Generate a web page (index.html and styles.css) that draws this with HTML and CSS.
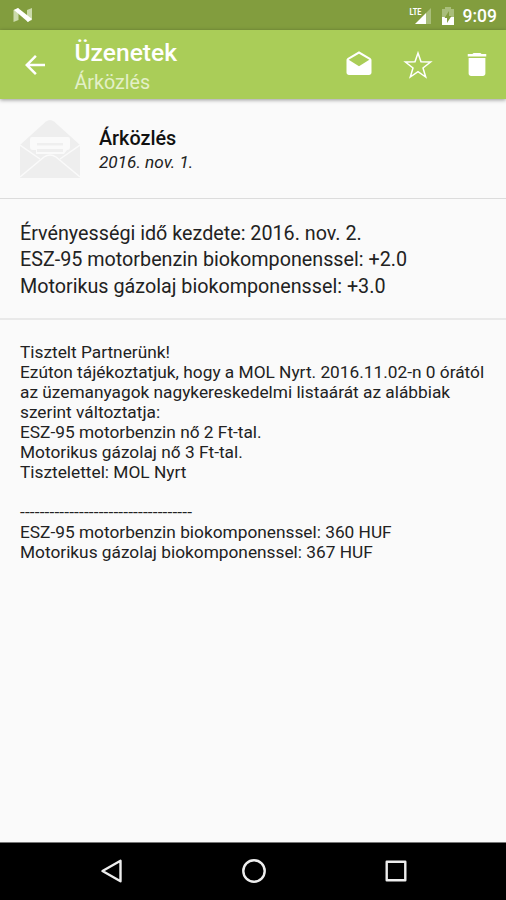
FILE: index.html
```
<!DOCTYPE html>
<html lang="hu">
<head>
    <meta charset="UTF-8">
    <meta name="viewport" content="width=device-width, initial-scale=1.0">
    <title>Üzenetek</title>
    <link rel="stylesheet" href="styles.css">
</head>
<body>
    <div class="status-bar">
        <svg class="logo" width="20" height="16" viewBox="0 0 20 16">
            <path d="M.5 3l5-2v12l-5 2zM14 3l5-2v12l-5 2z" fill="#cbdaab"/>
            <path d="M1 3l4-2 14 11-4 3z" fill="#fff"/>
        </svg>
        <svg class="signal" width="24" height="20" viewBox="0 0 24 20">
            <path d="M23 3v16h-5V8z" fill="#a9be7b"/>
            <path d="M18 8v11H7z" fill="#fff"/>
            <text class="lte" x="1.500" y="9.500" textLength="12" lengthAdjust="spacingAndGlyphs">LTE</text>
        </svg>
        <svg class="battery" width="12" height="20" viewBox="0 0 12 20">
            <path d="M0 3h3V1h6v2h3v8H0z" fill="#a9be7b"/>
            <path d="M0 11h12v8H0z" fill="#fff"/>
            <path d="M7 5v5h2.500l-4.500 7v-5H2.500z" fill="#829d3e"/>
        </svg>
        <span class="clock">9:09</span>
    </div>

    <div class="app-bar">
        <svg class="back" width="30" height="30" viewBox="0 0 24 24">
            <path d="M20 11H7.830l5.590-5.590L12 4l-8 8 8 8 1.410-1.410L7.830 13H20v-2z" fill="#fff"/>
        </svg>
        <div class="titles">
            <h1>Üzenetek</h1>
            <h2>Árközlés</h2>
        </div>
        <div class="actions">
            <svg width="30" height="30" viewBox="0 0 24 24">
                <path d="M21.990 8c0-.72-.37-1.350-.94-1.700L12 1 2.950 6.300C2.380 6.650 2 7.280 2 8v10c0 1.100.9 2 2 2h16c1.100 0 2-.9 2-2l-.01-10zM12 13L3.740 7.840 12 3l8.260 4.840L12 13z" fill="#fff"/>
            </svg>
            <svg width="30" height="30" viewBox="0 0 30 30">
                <path d="M15 3l3 8.800 9.600.2-7.600 6 2.700 9L15 21.600 7.300 27l2.700-9-7.600-6 9.600-.2z" fill="none" stroke="#fff" stroke-width="1.500"/>
            </svg>
            <svg width="30" height="30" viewBox="0 0 24 24">
                <path d="M5.300 18.700c0 1.100.9 2 2 2h9.400c1.100 0 2-.9 2-2V6.300H5.300v12.400zM19.400 3.200h-3.700l-1-.9H9.300l-1 .9H4.600v2h14.800z" fill="#fff"/>
            </svg>
        </div>
    </div>

    <div class="message-header">
        <svg class="envelope" width="60" height="60" viewBox="0 0 60 60">
            <path d="M0 26L26 2.500q4-3 8 0l26 23.500v33H0z" fill="#eee"/>
            <path d="M10 20q0-2 2-2h36q2 0 2 2v8q0 3-3 3l-3 4H16v-4h-3q-3 0-3-3z" fill="#fafafa"/>
            <path d="M17 24h26v2.500H17zM17 30h26v3H17z" fill="#efefef"/>
            <path d="M2 59l22-20q6-4 12 0l22 20z" fill="#eee"/>
            <path d="M0 26l20 14M60 26L40 40M0 58l24-20q6-4 12 0l24 20" fill="none" stroke="#fafafa" stroke-width="1.500"/>
        </svg>
        <div class="message-info">
            <h3>Árközlés</h3>
            <p class="date">2016. nov. 1.</p>
        </div>
    </div>

    <div class="summary">
        <p>Érvényességi idő kezdete: 2016. nov. 2.</p>
        <p>ESZ-95 motorbenzin biokomponenssel: +2.0</p>
        <p>Motorikus gázolaj biokomponenssel: +3.0</p>
    </div>

    <div class="message-body">
        <p>Tisztelt Partnerünk!</p>
        <p>Ezúton tájékoztatjuk, hogy a MOL Nyrt. 2016.11.02-n 0 órától<br>az üzemanyagok nagykereskedelmi listaárát az alábbiak<br>szerint változtatja:</p>
        <p>ESZ-95 motorbenzin nő 2 Ft-tal.</p>
        <p>Motorikus gázolaj nő 3 Ft-tal.</p>
        <p>Tisztelettel: MOL Nyrt</p>
        <br>
        <p class="dashes">-----------------------------------</p>
        <p>ESZ-95 motorbenzin biokomponenssel: 360 HUF</p>
        <p>Motorikus gázolaj biokomponenssel: 367 HUF</p>
    </div>

    <div class="nav-bar">
        <svg width="28" height="28" viewBox="0 0 28 28">
            <path d="M4.500 14L22.500 3.800v20.400z"/>
        </svg>
        <svg width="28" height="28" viewBox="0 0 28 28">
            <circle cx="14" cy="14" r="10.700"/>
        </svg>
        <svg width="28" height="28" viewBox="0 0 28 28">
            <rect x="4.700" y="4.700" width="18.600" height="18.600"/>
        </svg>
    </div>
</body>
</html>
```
FILE: styles.css
```
* {
    box-sizing: border-box;
    margin: 0;
    padding: 0;
}
body {
    height: 900px;
    display: flex;
    flex-direction: column;
    background: #fafafa;
    color: #222;
    font-family: Roboto, sans-serif;
    overflow: hidden;
}
svg {
    display: block;
    flex-shrink: 0;
}
.status-bar {
    height: 30px;
    display: flex;
    align-items: center;
    padding: 0 9px 0 13px;
    background: #829d3e;
}
.signal {
    margin-left: auto;
    margin-top: -1px;
}
.lte {
    font-size: 9.5px;
    font-weight: bold;
    fill: #fff;
}
.battery {
    margin: 1px 9px 0 10px;
}
.clock {
    color: #fff;
    font-size: 17.5px;
    font-weight: 500;
    line-height: 30px;
    padding-top: 2px;
}
.app-bar {
    height: 69px;
    display: flex;
    align-items: center;
    padding: 0 14px 0 20px;
    background: #aacd58;
    box-shadow: 0 1px 4px rgba(0, 0, 0, 0.4);
}
.titles {
    margin-left: 24.5px;
    padding-top: 5px;
}
h1 {
    color: #fff;
    font-size: 24.6px;
    font-weight: 500;
    line-height: 30px;
}
h2 {
    color: #e3f0c8;
    font-size: 19.7px;
    font-weight: normal;
    line-height: 29px;
}
.actions {
    display: flex;
    gap: 29px;
    margin-left: auto;
}
.message-header {
    height: 100px;
    display: flex;
    align-items: center;
    gap: 19px;
    padding: 0 20px;
    border-bottom: 1px solid #dcdcdc;
}
.message-info {
    padding-top: 3px;
}
h3 {
    color: #111;
    font-size: 19.8px;
    font-weight: 500;
    line-height: 25px;
}
.date {
    font-size: 17.2px;
    font-style: italic;
    line-height: 23px;
}
.summary {
    height: 121px;
    padding: 21.6px 20px 0;
    border-bottom: 2px solid #e9e9e9;
    font-size: 19.74px;
    line-height: 26.7px;
}
.message-body {
    flex: 1;
    padding: 22px 20px 0;
    font-size: 17.3px;
    line-height: 20.05px;
    white-space: nowrap;
}
.dashes {
    letter-spacing: 0.14px;
}
.nav-bar {
    height: 58px;
    display: flex;
    justify-content: center;
    gap: 114px;
    padding: 14px 0 0 1px;
    border-top: 1px solid #777;
    background: #000;
}
.nav-bar svg {
    fill: none;
    stroke: #eee;
    stroke-width: 2.4;
    stroke-linejoin: round;
}
```
